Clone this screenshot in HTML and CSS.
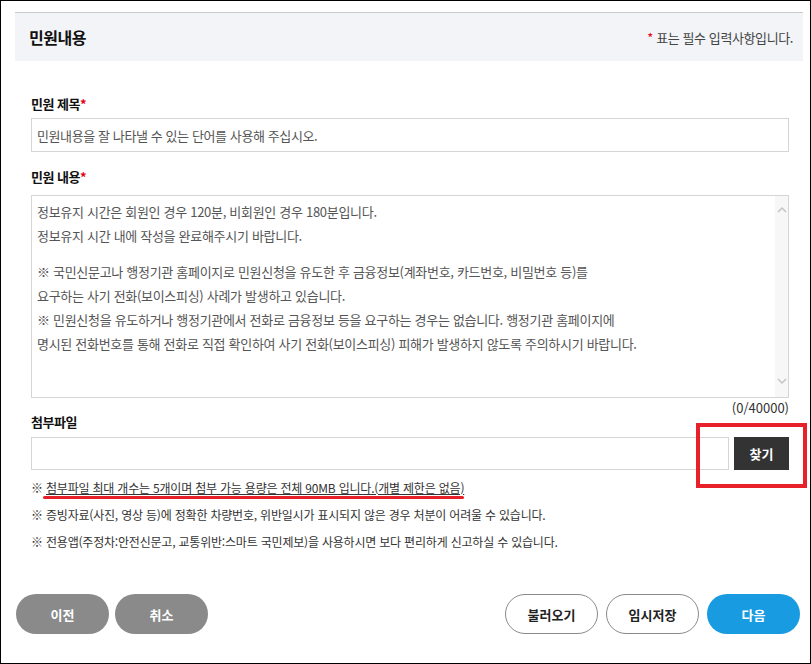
FILE: index.html
```html
<!DOCTYPE html>
<html lang="ko">
<head>
    <meta charset="UTF-8">
    <meta name="viewport" content="width=device-width, initial-scale=1.0">
    <title>민원내용</title>
    <link rel="stylesheet" href="styles.css">
</head>
<body>
    <div class="page">
        <div class="section-head">
            <h2>민원내용</h2>
            <p class="required-note"><span class="star">*</span> 표는 필수 입력사항입니다.</p>
        </div>

        <form class="form">
            <label class="field-label" for="title">민원 제목<span class="star">*</span></label>
            <input class="text-input" type="text" id="title" placeholder="민원내용을 잘 나타낼 수 있는 단어를 사용해 주십시오.">

            <label class="field-label label-content">민원 내용<span class="star">*</span></label>
            <div class="textarea">
                <div class="textarea-body">
                    <p>정보유지 시간은 회원인 경우 120분, 비회원인 경우 180분입니다.<br>정보유지 시간 내에 작성을 완료해주시기 바랍니다.</p>
                    <p>※ 국민신문고나 행정기관 홈페이지로 민원신청을 유도한 후 금융정보(계좌번호, 카드번호, 비밀번호 등)를<br>요구하는 사기 전화(보이스피싱) 사례가 발생하고 있습니다.<br>※ 민원신청을 유도하거나 행정기관에서 전화로 금융정보 등을 요구하는 경우는 없습니다. 행정기관 홈페이지에<br>명시된 전화번호를 통해 전화로 직접 확인하여 사기 전화(보이스피싱) 피해가 발생하지 않도록 주의하시기 바랍니다.</p>
                </div>
                <div class="scrollbar">
                    <svg width="12" height="8" viewBox="0 0 12 8"><path d="M2 6 L6 2 L10 6" fill="none" stroke="#c4c4c4" stroke-width="1.5"/></svg>
                    <svg width="12" height="8" viewBox="0 0 12 8"><path d="M2 2 L6 6 L10 2" fill="none" stroke="#c4c4c4" stroke-width="1.5"/></svg>
                </div>
            </div>
            <div class="counter">(0/40000)</div>

            <label class="field-label label-file" for="file">첨부파일</label>
            <div class="file-row">
                <input class="text-input file-input" type="text" id="file">
                <button type="button" class="btn-find">찾기</button>
            </div>

            <ul class="notes">
                <li>※ <span class="marked">첨부파일 최대 개수는 5개이며 첨부 가능 용량은 전체 90MB 입니다.(개별 제한은 없음)</span></li>
                <li>※ 증빙자료(사진, 영상 등)에 정확한 차량번호, 위반일시가 표시되지 않은 경우 처분이 어려울 수 있습니다.</li>
                <li>※ 전용앱(주정차:안전신문고, 교통위반:스마트 국민제보)을 사용하시면 보다 편리하게 신고하실 수 있습니다.</li>
            </ul>
        </form>

        <div class="actions">
            <div class="btn-group">
                <button type="button" class="btn btn-gray">이전</button>
                <button type="button" class="btn btn-gray">취소</button>
            </div>
            <div class="btn-group">
                <button type="button" class="btn btn-line">불러오기</button>
                <button type="button" class="btn btn-line">임시저장</button>
                <button type="button" class="btn btn-blue">다음</button>
            </div>
        </div>

        <!-- 강조 표시 -->
        <div class="highlight-box"></div>
    </div>
</body>
</html>
```

FILE: styles.css
```css
* {
    box-sizing: border-box;
}
body {
    margin: 0;
    font-family: "Noto Sans CJK KR", "Noto Sans", sans-serif;
    color: #222;
}
.page {
    position: relative;
    width: 811px;
    height: 664px;
    border: 1px solid #000;
    background: #fff;
}
.star {
    color: #e60012;
}

/* 상단 제목 */
.section-head {
    display: flex;
    justify-content: space-between;
    align-items: center;
    height: 49px;
    margin: 11px 7px 0 14px;
    padding: 0 10px 0 14px;
    border-top: 1px solid #c9cacc;
    background: #f3f4f7;
}
.section-head h2 {
    margin: 0;
    font-size: 16px;
    font-weight: bold;
    color: #111;
    letter-spacing: -0.5px;
}
.required-note {
    margin: 0;
    font-size: 13px;
    color: #444;
    letter-spacing: -0.4px;
}

/* 입력 폼 */
.form {
    padding: 0 21px 0 30px;
}
.field-label {
    display: block;
    margin-top: 33px;
    font-size: 13px;
    font-weight: bold;
    line-height: 20px;
    color: #111;
    letter-spacing: -0.5px;
}
.label-content {
    margin-top: 15px;
}
.text-input {
    display: block;
    width: 100%;
    height: 34px;
    margin-top: 4px;
    padding: 0 5px;
    border: 1px solid #d5d5d5;
    font-family: inherit;
    font-size: 13px;
    letter-spacing: -0.4px;
    color: #333;
    outline: none;
}
.text-input::placeholder {
    color: #555;
}
.textarea {
    display: flex;
    height: 203px;
    margin-top: 8px;
    border: 1px solid #d5d5d5;
}
.textarea-body {
    flex: 1;
    padding: 4px 5px;
    font-size: 13px;
    line-height: 24px;
    color: #555;
    letter-spacing: -0.3px;
}
.textarea-body p {
    margin: 0 0 12px;
}
.scrollbar {
    display: flex;
    flex-direction: column;
    justify-content: space-between;
    align-items: center;
    width: 13px;
    padding: 10px 0 12px;
    background: #f7f7f7;
}
.counter {
    margin-top: 3px;
    font-size: 13px;
    line-height: 14px;
    text-align: right;
    color: #333;
}
.label-file {
    margin-top: -1px;
    line-height: 16px;
}
.file-row {
    display: flex;
    gap: 5px;
    margin-top: 7px;
}
.file-input {
    flex: 1;
    height: 33px;
    margin-top: 0;
}
.btn-find {
    width: 55px;
    height: 33px;
    border: none;
    background: #333;
    color: #fff;
    font-family: inherit;
    font-size: 13px;
    font-weight: bold;
}
.notes {
    margin: 8px 0 0;
    padding: 0;
    list-style: none;
    font-size: 12px;
    line-height: 20px;
    color: #333;
    letter-spacing: -0.2px;
}
.notes li + li {
    margin-top: 7px;
}
.marked {
    position: relative;
    text-decoration: underline;
}
.marked::after {
    content: "";
    position: absolute;
    left: -3px;
    right: 0;
    bottom: -3px;
    height: 3px;
    border-radius: 2px;
    background: #e8202a;
}

/* 하단 버튼 */
.actions {
    display: flex;
    justify-content: space-between;
    margin-top: 42px;
    padding: 0 10px 0 15px;
}
.btn-group {
    display: flex;
    gap: 6px;
}
.btn-group + .btn-group {
    gap: 8px;
}
.btn {
    width: 93px;
    height: 40px;
    border-radius: 20px;
    font-family: inherit;
    font-size: 13px;
    font-weight: bold;
    cursor: pointer;
}
.btn-gray {
    border: none;
    background: #8a8a8a;
    color: #fff;
}
.btn-line {
    border: 1px solid #8a8a8a;
    background: #fff;
    color: #222;
}
.btn-blue {
    border: none;
    background: #189be0;
    color: #fff;
}

.highlight-box {
    position: absolute;
    left: 695px;
    top: 422px;
    width: 111px;
    height: 65px;
    border: 4px solid #e8202a;
}
```
